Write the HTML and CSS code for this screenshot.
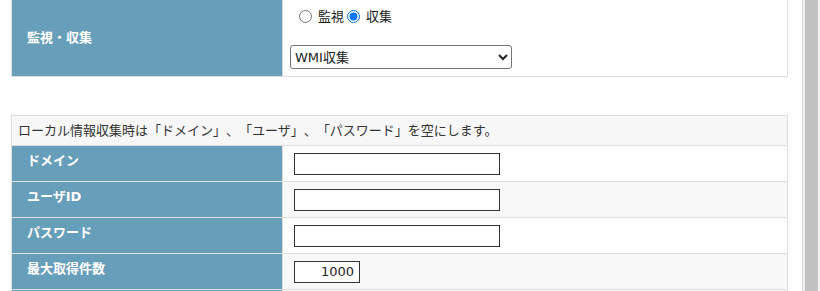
FILE: index.html
```html
<!DOCTYPE html>
<html lang="ja">
<head>
<meta charset="utf-8">
<title>設定</title>
<link rel="stylesheet" href="styles.css">
</head>
<body>
<div class="page">
  <div class="form form-mode">
    <div class="label">監視・収集</div>
    <div class="value value-mode">
      <div class="radios">
        <label class="opt"><input type="radio" name="mode"><span>監視</span></label>
        <label class="opt"><input type="radio" name="mode" checked><span>収集</span></label>
      </div>
      <select class="sel"><option>WMI収集</option><option>SNMP収集</option></select>
    </div>
  </div>

  <div class="form form-cred">
    <div class="notice">ローカル情報収集時は「ドメイン」、「ユーザ」、「パスワード」を空にします。</div>
    <div class="label">ドメイン</div>
    <div class="value"><input class="txt" type="text"></div>
    <div class="label">ユーザID</div>
    <div class="value alt"><input class="txt" type="text"></div>
    <div class="label">パスワード</div>
    <div class="value"><input class="txt" type="password"></div>
    <div class="label">最大取得件数</div>
    <div class="value alt"><input class="txt num" type="text" value="1000"></div>
    <div class="label"></div>
    <div class="value"></div>
  </div>
</div>
<div class="scrollbar"><div class="thumb"></div></div>
</body>
</html>
```
FILE: styles.css
```css
html, body {
  margin: 0;
  padding: 0;
  background: #fff;
  overflow: hidden;
}
body {
  font-family: "DejaVu Sans", "Noto Sans CJK JP", sans-serif;
  font-size: 13px;
  line-height: 1.3;
  color: #333;
  text-spacing-trim: space-all;
}
.page {
  padding-left: 11px;
}
.form {
  display: grid;
  grid-template-columns: 270px 504px;
  gap: 1px;
  background: #dddddd;
  border: 1px solid #dddddd;
  width: 777px;
  box-sizing: border-box;
}
.form-mode {
  border-top: none;
  grid-template-rows: 76px;
}
.form-cred {
  margin-top: 38px;
  grid-template-rows: 29px repeat(5, 35px);
}
.label {
  background: #679eba;
  color: #fff;
  font-weight: bold;
  display: flex;
  align-items: center;
  padding: 0 15px 4px;
}
.form-mode .label {
  padding-bottom: 0;
}
.value {
  background: #fff;
  display: flex;
  align-items: center;
  padding-left: 11px;
}
.value.alt {
  background: #f8f8f8;
}
.value-mode {
  flex-direction: column;
  align-items: flex-start;
  justify-content: flex-start;
  padding: 6px 0 0 7px;
}
.radios {
  display: flex;
  align-items: center;
  height: 22px;
  padding-left: 9px;
}
.opt {
  display: flex;
  align-items: center;
  margin-right: 3px;
  color: #222;
}
.opt input {
  margin: 0 6px 0 0;
  width: 13px;
  height: 13px;
}
.sel {
  margin-top: 17px;
  width: 222px;
  height: 24px;
  font-family: "DejaVu Sans", "Noto Sans CJK JP", sans-serif;
  font-size: 13px;
  color: #222;
  border: 1px solid #767676;
  border-radius: 3px;
  background: #fff;
}
.notice {
  grid-column: 1 / 3;
  background: #f7f7f7;
  display: flex;
  align-items: center;
  padding-left: 6px;
  font-family: "Noto Sans CJK JP", sans-serif;
  color: #333;
  text-spacing-trim: space-all;
  font-feature-settings: "palt" 0, "halt" 0;
}
.txt {
  width: 206px;
  height: 22px;
  box-sizing: border-box;
  border: 1px solid #333;
  border-radius: 0;
  padding: 1px 4px;
  margin: 0;
  font-family: "DejaVu Sans", "Noto Sans CJK JP", sans-serif;
  font-size: 13px;
  color: #222;
  background: #fff;
}
.num {
  width: 66px;
  text-align: right;
  padding-right: 5px;
}
.scrollbar {
  position: fixed;
  top: 0;
  left: 802px;
  width: 18px;
  height: 100%;
  background: #f1f1f1;
  border-left: 1px solid #d4d4d4;
  box-sizing: border-box;
}
.thumb {
  position: absolute;
  top: 0;
  bottom: 0;
  left: 2px;
  width: 13px;
  background: #c1c1c1;
}
```
